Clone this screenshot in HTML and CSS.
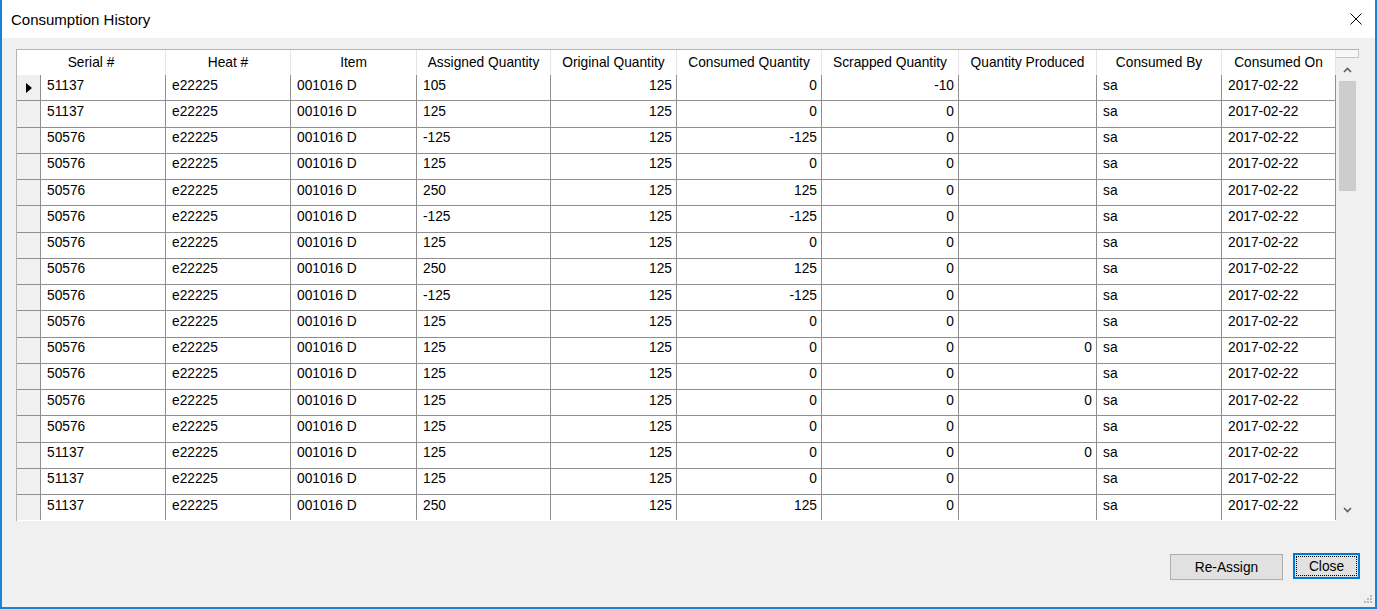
FILE: index.html
```html
<!DOCTYPE html>
<html lang="en">
<head>
    <meta charset="UTF-8">
    <meta name="viewport" content="width=device-width, initial-scale=1.0">
    <title>Consumption History</title>
    <link rel="stylesheet" href="styles.css">
</head>
<body>
    <div class="window">
        <div class="titlebar">
            <span class="title">Consumption History</span>
            <svg class="close-x" width="12" height="12" viewBox="0 0 12 12">
                <path d="M0.5 0.5 L11.5 11.5 M11.5 0.5 L0.5 11.5" stroke="#000" stroke-width="1" fill="none"/>
            </svg>
        </div>

        <div class="client">
            <div class="grid">
                <div class="grid-main">
                    <div class="grid-header">
                        <div class="hcell">Serial #</div>
                        <div class="hcell">Heat #</div>
                        <div class="hcell">Item</div>
                        <div class="hcell">Assigned Quantity</div>
                        <div class="hcell">Original Quantity</div>
                        <div class="hcell">Consumed Quantity</div>
                        <div class="hcell">Scrapped Quantity</div>
                        <div class="hcell">Quantity Produced</div>
                        <div class="hcell">Consumed By</div>
                        <div class="hcell">Consumed On</div>
                    </div>
                    <div class="grid-body" id="filas">
                        <!-- filas generadas abajo -->
                    </div>
                </div>
                <div class="vscroll">
                    <div class="vs-corner"></div>
                    <div class="vs-btn">
                        <svg width="9" height="6" viewBox="0 0 9 6"><path d="M1 5 L4.5 1.5 L8 5" stroke="#606060" stroke-width="1.6" fill="none"/></svg>
                    </div>
                    <div class="vs-track">
                        <div class="vs-thumb"></div>
                    </div>
                    <div class="vs-btn">
                        <svg width="9" height="6" viewBox="0 0 9 6"><path d="M1 1 L4.5 4.5 L8 1" stroke="#606060" stroke-width="1.6" fill="none"/></svg>
                    </div>
                </div>
            </div>

            <div class="footer">
                <button class="btn btn-reassign">Re-Assign</button>
                <button class="btn btn-close">Close</button>
            </div>
        </div>

        <svg class="grip" width="9" height="9" viewBox="0 0 9 9">
            <rect x="6" y="0" width="2" height="2" fill="#b8b8b8"/>
            <rect x="3" y="3" width="2" height="2" fill="#b8b8b8"/>
            <rect x="6" y="3" width="2" height="2" fill="#b8b8b8"/>
            <rect x="0" y="6" width="2" height="2" fill="#b8b8b8"/>
            <rect x="3" y="6" width="2" height="2" fill="#b8b8b8"/>
            <rect x="6" y="6" width="2" height="2" fill="#b8b8b8"/>
        </svg>
    </div>

    <script>
        // serial, heat, item, asignado, original, consumido, desechado, producido, usuario, fecha
        const consumos = [
            ['51137', 'e22225', '001016 D', '105', '125', '0', '-10', '', 'sa', '2017-02-22'],
            ['51137', 'e22225', '001016 D', '125', '125', '0', '0', '', 'sa', '2017-02-22'],
            ['50576', 'e22225', '001016 D', '-125', '125', '-125', '0', '', 'sa', '2017-02-22'],
            ['50576', 'e22225', '001016 D', '125', '125', '0', '0', '', 'sa', '2017-02-22'],
            ['50576', 'e22225', '001016 D', '250', '125', '125', '0', '', 'sa', '2017-02-22'],
            ['50576', 'e22225', '001016 D', '-125', '125', '-125', '0', '', 'sa', '2017-02-22'],
            ['50576', 'e22225', '001016 D', '125', '125', '0', '0', '', 'sa', '2017-02-22'],
            ['50576', 'e22225', '001016 D', '250', '125', '125', '0', '', 'sa', '2017-02-22'],
            ['50576', 'e22225', '001016 D', '-125', '125', '-125', '0', '', 'sa', '2017-02-22'],
            ['50576', 'e22225', '001016 D', '125', '125', '0', '0', '', 'sa', '2017-02-22'],
            ['50576', 'e22225', '001016 D', '125', '125', '0', '0', '0', 'sa', '2017-02-22'],
            ['50576', 'e22225', '001016 D', '125', '125', '0', '0', '', 'sa', '2017-02-22'],
            ['50576', 'e22225', '001016 D', '125', '125', '0', '0', '0', 'sa', '2017-02-22'],
            ['50576', 'e22225', '001016 D', '125', '125', '0', '0', '', 'sa', '2017-02-22'],
            ['51137', 'e22225', '001016 D', '125', '125', '0', '0', '0', 'sa', '2017-02-22'],
            ['51137', 'e22225', '001016 D', '125', '125', '0', '0', '', 'sa', '2017-02-22'],
            ['51137', 'e22225', '001016 D', '250', '125', '125', '0', '', 'sa', '2017-02-22']
        ];

        // columnas alineadas a la derecha
        const numericas = [4, 5, 6, 7];

        function mostrarFilas() {
            const cuerpo = document.getElementById('filas');
            cuerpo.innerHTML = '';

            consumos.forEach((fila, index) => {
                const div = document.createElement('div');
                div.className = 'grid-row';
                div.innerHTML = `
                    <div class="rowhead">${index === 0 ? '<span class="current"></span>' : ''}</div>
                    ${fila.map((valor, col) => `
                        <div class="cell${numericas.includes(col) ? ' num' : ''}">${valor}</div>
                    `).join('')}
                `;
                cuerpo.appendChild(div);
            });
        }

        mostrarFilas();
    </script>
</body>
</html>
```

FILE: styles.css
```css
body {
    margin: 0;
    padding: 0;
    font-family: 'Liberation Sans', Arial, sans-serif;
    color: #000;
    background-color: #f0f0f0;
}
.window {
    position: relative;
    width: 1377px;
    height: 609px;
    box-sizing: border-box;
    border: solid #1883d7;
    border-width: 0 2px 2px 2px;
    background-color: #f0f0f0;
    display: flex;
    flex-direction: column;
    overflow: hidden;
}
.titlebar {
    height: 38px;
    flex: none;
    background-color: #fff;
    display: flex;
    align-items: center;
    justify-content: space-between;
    padding: 0 13px 0 9px;
}
.title {
    font-size: 15px;
}
.client {
    flex: 1;
    padding: 11px 16px 0 14px;
}
.grid {
    display: flex;
    border-top: 1px solid #b4b4b4;
    border-left: 1px solid #b4b4b4;
    height: 471px;
    font-size: 13.75px;
    line-height: 16px;
}
.grid-main {
    width: 1319px;
    background-color: #fff;
}
.grid-header {
    display: grid;
    grid-template-columns: 149px 125px 126px 134px 126px 145px 137px 138px 125px 114px;
    height: 25px;
}
.hcell {
    border-right: 1px solid #e5e5e5;
    text-align: center;
    padding-top: 5px;
    white-space: nowrap;
    overflow: hidden;
}
.grid-body {
    height: 445px;
    overflow: hidden;
}
.grid-row {
    display: grid;
    grid-template-columns: 24px 125px 125px 126px 134px 126px 145px 137px 138px 125px 114px;
    height: 26.25px;
}
.rowhead {
    background-color: #f0f0f0;
    border-right: 1px solid #8f8f8f;
    border-bottom: 1px solid #8f8f8f;
    display: flex;
    align-items: center;
    padding-left: 9px;
}
.current {
    width: 0;
    height: 0;
    border-left: 6px solid #000;
    border-top: 5px solid transparent;
    border-bottom: 5px solid transparent;
}
.cell {
    border-right: 1px solid #8f8f8f;
    border-bottom: 1px solid #8f8f8f;
    padding: 2.5px 6px 0 6px;
    white-space: nowrap;
    overflow: hidden;
}
.cell.num {
    text-align: right;
    padding-right: 4px;
}
.vscroll {
    width: 23px;
    display: flex;
    flex-direction: column;
    background-color: #f0f0f0;
}
.vs-corner {
    height: 7px;
    background-color: #f7f7f7;
    border-right: 1px solid #c6c6c6;
    border-bottom: 1px solid #c6c6c6;
}
.vs-btn {
    height: 23px;
    display: flex;
    align-items: center;
    justify-content: center;
}
.vs-track {
    flex: 1;
    padding-left: 3px;
}
.vs-thumb {
    width: 17px;
    height: 110px;
    background-color: #cdcdcd;
}
.footer {
    display: flex;
    justify-content: flex-end;
    gap: 10px;
    margin-top: 33px;
    margin-right: -1px;
}
.btn {
    height: 26px;
    box-sizing: border-box;
    background-color: #e1e1e1;
    border: 1px solid #adadad;
    font-family: 'Liberation Sans', Arial, sans-serif;
    font-size: 13.75px;
    color: #000;
    padding: 0;
    position: relative;
}
.btn-reassign {
    width: 113px;
}
.btn-close {
    width: 67px;
    border: 2px solid #0078d7;
    margin-top: -1px;
}
.btn-close::after {
    content: '';
    position: absolute;
    top: 1px;
    left: 1px;
    right: 1px;
    bottom: 1px;
    border: 1px dotted #000;
}
.grip {
    position: absolute;
    right: 2px;
    bottom: 3px;
}
```
